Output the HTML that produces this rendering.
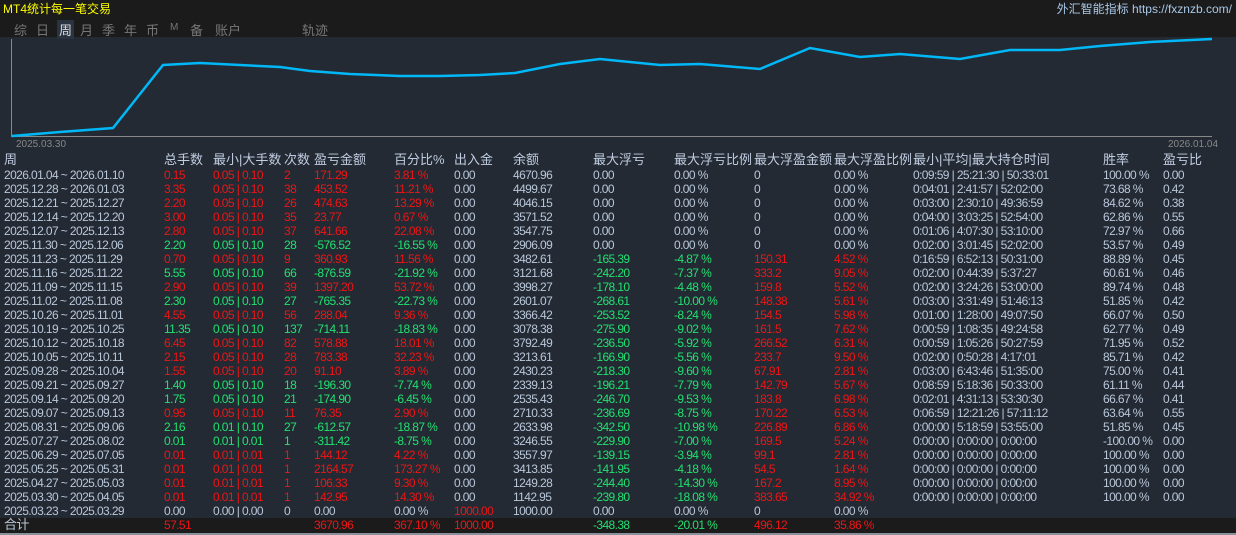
<!DOCTYPE html><html><head><meta charset="utf-8"><style>
*{margin:0;padding:0;box-sizing:border-box}
body{width:1236px;height:535px;background:#232a33;font-family:"Liberation Sans","Noto Sans CJK SC",sans-serif;font-size:12px;color:#b9c7da;position:relative;overflow:hidden}
.top{position:absolute;left:0;top:0;width:1236px;height:37px;background:#1b1b1b}
.title{position:absolute;left:3px;top:0;color:#ffff00;font-size:12px}
.site{position:absolute;right:4px;top:0;color:#a8c8e8;font-size:12px}
.tabs{position:absolute;top:20px;left:0;font-size:13px;color:#777}
.tabs span{position:absolute;white-space:nowrap}
.r{position:absolute;left:0;width:1236px;height:14px;line-height:14px;white-space:nowrap;letter-spacing:-0.6px}
.r span{position:absolute}
.c1{left:4px}.c2{left:164px}.c3{left:213px}.c4{left:284px}.c5{left:314px}.c6{left:394px}.c7{left:454px}.c8{left:513px}.c9{left:593px}.c10{left:674px}.c11{left:754px}.c12{left:834px}.c13{left:913px}.c14{left:1103px}.c15{left:1163px}
.R{color:#ee1515}.G{color:#22e070}
.h{font-size:13px;color:#c0cce0;letter-spacing:0}
.tot{background:#1b1b1b;height:16px;top:518px}
</style></head><body>
<div class="top"></div>
<div class="title">MT4统计每一笔交易</div>
<div class="site">外汇智能指标 https://fxznzb.com/</div>
<div class="tabs"><span style="left:14px">综</span><span style="left:36px">日</span><span style="left:58px;color:#ddd;background:#2a3340;padding:0 2px;left:57px">周</span><span style="left:80px">月</span><span style="left:102px">季</span><span style="left:124px">年</span><span style="left:146px">币</span><span style="left:170px;font-size:10px;top:2px">M</span><span style="left:190px">备</span><span style="left:215px">账户</span><span style="left:302px">轨迹</span></div>
<svg style="position:absolute;left:0;top:37px" width="1236" height="120">
<line x1="11.5" y1="2" x2="11.5" y2="100" stroke="#888"/>
<line x1="11" y1="99.5" x2="1212" y2="99.5" stroke="#888"/>
<polyline fill="none" stroke="#00b8f8" stroke-width="2.5" points="12,99 60,95 113,91 163,28 200,26 240,28 280,30 310,34 350,37 400,39 440,39 480,38 515,36 560,27 600,22 660,28 700,27 760,32 810,11 860,20 900,17 960,22 1010,13 1060,13 1100,9 1150,5 1212,2"/>
<text x="16" y="110" fill="#888" font-size="10" font-family="Liberation Sans">2025.03.30</text>
<text x="1168" y="110" fill="#888" font-size="10" font-family="Liberation Sans">2026.01.04</text>
</svg>
<div class="r h" style="top:153px"><span class="c1">周</span><span class="c2">总手数</span><span class="c3">最小|大手数</span><span class="c4">次数</span><span class="c5">盈亏金额</span><span class="c6">百分比%</span><span class="c7">出入金</span><span class="c8">余额</span><span class="c9">最大浮亏</span><span class="c10">最大浮亏比例</span><span class="c11">最大浮盈金额</span><span class="c12">最大浮盈比例</span><span class="c13">最小|平均|最大持仓时间</span><span class="c14">胜率</span><span class="c15">盈亏比</span></div>
<div class="r" style="top:168px"><span class="c1">2026.01.04 ~ 2026.01.10</span><span class="c2 R">0.15</span><span class="c3 R">0.05 | 0.10</span><span class="c4 R">2</span><span class="c5 R">171.29</span><span class="c6 R">3.81 %</span><span class="c7">0.00</span><span class="c8">4670.96</span><span class="c9">0.00</span><span class="c10">0.00 %</span><span class="c11">0</span><span class="c12">0.00 %</span><span class="c13">0:09:59 | 25:21:30 | 50:33:01</span><span class="c14">100.00 %</span><span class="c15">0.00</span></div>
<div class="r" style="top:182px"><span class="c1">2025.12.28 ~ 2026.01.03</span><span class="c2 R">3.35</span><span class="c3 R">0.05 | 0.10</span><span class="c4 R">38</span><span class="c5 R">453.52</span><span class="c6 R">11.21 %</span><span class="c7">0.00</span><span class="c8">4499.67</span><span class="c9">0.00</span><span class="c10">0.00 %</span><span class="c11">0</span><span class="c12">0.00 %</span><span class="c13">0:04:01 | 2:41:57 | 52:02:00</span><span class="c14">73.68 %</span><span class="c15">0.42</span></div>
<div class="r" style="top:196px"><span class="c1">2025.12.21 ~ 2025.12.27</span><span class="c2 R">2.20</span><span class="c3 R">0.05 | 0.10</span><span class="c4 R">26</span><span class="c5 R">474.63</span><span class="c6 R">13.29 %</span><span class="c7">0.00</span><span class="c8">4046.15</span><span class="c9">0.00</span><span class="c10">0.00 %</span><span class="c11">0</span><span class="c12">0.00 %</span><span class="c13">0:03:00 | 2:30:10 | 49:36:59</span><span class="c14">84.62 %</span><span class="c15">0.38</span></div>
<div class="r" style="top:210px"><span class="c1">2025.12.14 ~ 2025.12.20</span><span class="c2 R">3.00</span><span class="c3 R">0.05 | 0.10</span><span class="c4 R">35</span><span class="c5 R">23.77</span><span class="c6 R">0.67 %</span><span class="c7">0.00</span><span class="c8">3571.52</span><span class="c9">0.00</span><span class="c10">0.00 %</span><span class="c11">0</span><span class="c12">0.00 %</span><span class="c13">0:04:00 | 3:03:25 | 52:54:00</span><span class="c14">62.86 %</span><span class="c15">0.55</span></div>
<div class="r" style="top:224px"><span class="c1">2025.12.07 ~ 2025.12.13</span><span class="c2 R">2.80</span><span class="c3 R">0.05 | 0.10</span><span class="c4 R">37</span><span class="c5 R">641.66</span><span class="c6 R">22.08 %</span><span class="c7">0.00</span><span class="c8">3547.75</span><span class="c9">0.00</span><span class="c10">0.00 %</span><span class="c11">0</span><span class="c12">0.00 %</span><span class="c13">0:01:06 | 4:07:30 | 53:10:00</span><span class="c14">72.97 %</span><span class="c15">0.66</span></div>
<div class="r" style="top:238px"><span class="c1">2025.11.30 ~ 2025.12.06</span><span class="c2 G">2.20</span><span class="c3 G">0.05 | 0.10</span><span class="c4 G">28</span><span class="c5 G">-576.52</span><span class="c6 G">-16.55 %</span><span class="c7">0.00</span><span class="c8">2906.09</span><span class="c9">0.00</span><span class="c10">0.00 %</span><span class="c11">0</span><span class="c12">0.00 %</span><span class="c13">0:02:00 | 3:01:45 | 52:02:00</span><span class="c14">53.57 %</span><span class="c15">0.49</span></div>
<div class="r" style="top:252px"><span class="c1">2025.11.23 ~ 2025.11.29</span><span class="c2 R">0.70</span><span class="c3 R">0.05 | 0.10</span><span class="c4 R">9</span><span class="c5 R">360.93</span><span class="c6 R">11.56 %</span><span class="c7">0.00</span><span class="c8">3482.61</span><span class="c9 G">-165.39</span><span class="c10 G">-4.87 %</span><span class="c11 R">150.31</span><span class="c12 R">4.52 %</span><span class="c13">0:16:59 | 6:52:13 | 50:31:00</span><span class="c14">88.89 %</span><span class="c15">0.45</span></div>
<div class="r" style="top:266px"><span class="c1">2025.11.16 ~ 2025.11.22</span><span class="c2 G">5.55</span><span class="c3 G">0.05 | 0.10</span><span class="c4 G">66</span><span class="c5 G">-876.59</span><span class="c6 G">-21.92 %</span><span class="c7">0.00</span><span class="c8">3121.68</span><span class="c9 G">-242.20</span><span class="c10 G">-7.37 %</span><span class="c11 R">333.2</span><span class="c12 R">9.05 %</span><span class="c13">0:02:00 | 0:44:39 | 5:37:27</span><span class="c14">60.61 %</span><span class="c15">0.46</span></div>
<div class="r" style="top:280px"><span class="c1">2025.11.09 ~ 2025.11.15</span><span class="c2 R">2.90</span><span class="c3 R">0.05 | 0.10</span><span class="c4 R">39</span><span class="c5 R">1397.20</span><span class="c6 R">53.72 %</span><span class="c7">0.00</span><span class="c8">3998.27</span><span class="c9 G">-178.10</span><span class="c10 G">-4.48 %</span><span class="c11 R">159.8</span><span class="c12 R">5.52 %</span><span class="c13">0:02:00 | 3:24:26 | 53:00:00</span><span class="c14">89.74 %</span><span class="c15">0.48</span></div>
<div class="r" style="top:294px"><span class="c1">2025.11.02 ~ 2025.11.08</span><span class="c2 G">2.30</span><span class="c3 G">0.05 | 0.10</span><span class="c4 G">27</span><span class="c5 G">-765.35</span><span class="c6 G">-22.73 %</span><span class="c7">0.00</span><span class="c8">2601.07</span><span class="c9 G">-268.61</span><span class="c10 G">-10.00 %</span><span class="c11 R">148.38</span><span class="c12 R">5.61 %</span><span class="c13">0:03:00 | 3:31:49 | 51:46:13</span><span class="c14">51.85 %</span><span class="c15">0.42</span></div>
<div class="r" style="top:308px"><span class="c1">2025.10.26 ~ 2025.11.01</span><span class="c2 R">4.55</span><span class="c3 R">0.05 | 0.10</span><span class="c4 R">56</span><span class="c5 R">288.04</span><span class="c6 R">9.36 %</span><span class="c7">0.00</span><span class="c8">3366.42</span><span class="c9 G">-253.52</span><span class="c10 G">-8.24 %</span><span class="c11 R">154.5</span><span class="c12 R">5.98 %</span><span class="c13">0:01:00 | 1:28:00 | 49:07:50</span><span class="c14">66.07 %</span><span class="c15">0.50</span></div>
<div class="r" style="top:322px"><span class="c1">2025.10.19 ~ 2025.10.25</span><span class="c2 G">11.35</span><span class="c3 G">0.05 | 0.10</span><span class="c4 G">137</span><span class="c5 G">-714.11</span><span class="c6 G">-18.83 %</span><span class="c7">0.00</span><span class="c8">3078.38</span><span class="c9 G">-275.90</span><span class="c10 G">-9.02 %</span><span class="c11 R">161.5</span><span class="c12 R">7.62 %</span><span class="c13">0:00:59 | 1:08:35 | 49:24:58</span><span class="c14">62.77 %</span><span class="c15">0.49</span></div>
<div class="r" style="top:336px"><span class="c1">2025.10.12 ~ 2025.10.18</span><span class="c2 R">6.45</span><span class="c3 R">0.05 | 0.10</span><span class="c4 R">82</span><span class="c5 R">578.88</span><span class="c6 R">18.01 %</span><span class="c7">0.00</span><span class="c8">3792.49</span><span class="c9 G">-236.50</span><span class="c10 G">-5.92 %</span><span class="c11 R">266.52</span><span class="c12 R">6.31 %</span><span class="c13">0:00:59 | 1:05:26 | 50:27:59</span><span class="c14">71.95 %</span><span class="c15">0.52</span></div>
<div class="r" style="top:350px"><span class="c1">2025.10.05 ~ 2025.10.11</span><span class="c2 R">2.15</span><span class="c3 R">0.05 | 0.10</span><span class="c4 R">28</span><span class="c5 R">783.38</span><span class="c6 R">32.23 %</span><span class="c7">0.00</span><span class="c8">3213.61</span><span class="c9 G">-166.90</span><span class="c10 G">-5.56 %</span><span class="c11 R">233.7</span><span class="c12 R">9.50 %</span><span class="c13">0:02:00 | 0:50:28 | 4:17:01</span><span class="c14">85.71 %</span><span class="c15">0.42</span></div>
<div class="r" style="top:364px"><span class="c1">2025.09.28 ~ 2025.10.04</span><span class="c2 R">1.55</span><span class="c3 R">0.05 | 0.10</span><span class="c4 R">20</span><span class="c5 R">91.10</span><span class="c6 R">3.89 %</span><span class="c7">0.00</span><span class="c8">2430.23</span><span class="c9 G">-218.30</span><span class="c10 G">-9.60 %</span><span class="c11 R">67.91</span><span class="c12 R">2.81 %</span><span class="c13">0:03:00 | 6:43:46 | 51:35:00</span><span class="c14">75.00 %</span><span class="c15">0.41</span></div>
<div class="r" style="top:378px"><span class="c1">2025.09.21 ~ 2025.09.27</span><span class="c2 G">1.40</span><span class="c3 G">0.05 | 0.10</span><span class="c4 G">18</span><span class="c5 G">-196.30</span><span class="c6 G">-7.74 %</span><span class="c7">0.00</span><span class="c8">2339.13</span><span class="c9 G">-196.21</span><span class="c10 G">-7.79 %</span><span class="c11 R">142.79</span><span class="c12 R">5.67 %</span><span class="c13">0:08:59 | 5:18:36 | 50:33:00</span><span class="c14">61.11 %</span><span class="c15">0.44</span></div>
<div class="r" style="top:392px"><span class="c1">2025.09.14 ~ 2025.09.20</span><span class="c2 G">1.75</span><span class="c3 G">0.05 | 0.10</span><span class="c4 G">21</span><span class="c5 G">-174.90</span><span class="c6 G">-6.45 %</span><span class="c7">0.00</span><span class="c8">2535.43</span><span class="c9 G">-246.70</span><span class="c10 G">-9.53 %</span><span class="c11 R">183.8</span><span class="c12 R">6.98 %</span><span class="c13">0:02:01 | 4:31:13 | 53:30:30</span><span class="c14">66.67 %</span><span class="c15">0.41</span></div>
<div class="r" style="top:406px"><span class="c1">2025.09.07 ~ 2025.09.13</span><span class="c2 R">0.95</span><span class="c3 R">0.05 | 0.10</span><span class="c4 R">11</span><span class="c5 R">76.35</span><span class="c6 R">2.90 %</span><span class="c7">0.00</span><span class="c8">2710.33</span><span class="c9 G">-236.69</span><span class="c10 G">-8.75 %</span><span class="c11 R">170.22</span><span class="c12 R">6.53 %</span><span class="c13">0:06:59 | 12:21:26 | 57:11:12</span><span class="c14">63.64 %</span><span class="c15">0.55</span></div>
<div class="r" style="top:420px"><span class="c1">2025.08.31 ~ 2025.09.06</span><span class="c2 G">2.16</span><span class="c3 G">0.01 | 0.10</span><span class="c4 G">27</span><span class="c5 G">-612.57</span><span class="c6 G">-18.87 %</span><span class="c7">0.00</span><span class="c8">2633.98</span><span class="c9 G">-342.50</span><span class="c10 G">-10.98 %</span><span class="c11 R">226.89</span><span class="c12 R">6.86 %</span><span class="c13">0:00:00 | 5:18:59 | 53:55:00</span><span class="c14">51.85 %</span><span class="c15">0.45</span></div>
<div class="r" style="top:434px"><span class="c1">2025.07.27 ~ 2025.08.02</span><span class="c2 G">0.01</span><span class="c3 G">0.01 | 0.01</span><span class="c4 G">1</span><span class="c5 G">-311.42</span><span class="c6 G">-8.75 %</span><span class="c7">0.00</span><span class="c8">3246.55</span><span class="c9 G">-229.90</span><span class="c10 G">-7.00 %</span><span class="c11 R">169.5</span><span class="c12 R">5.24 %</span><span class="c13">0:00:00 | 0:00:00 | 0:00:00</span><span class="c14">-100.00 %</span><span class="c15">0.00</span></div>
<div class="r" style="top:448px"><span class="c1">2025.06.29 ~ 2025.07.05</span><span class="c2 R">0.01</span><span class="c3 R">0.01 | 0.01</span><span class="c4 R">1</span><span class="c5 R">144.12</span><span class="c6 R">4.22 %</span><span class="c7">0.00</span><span class="c8">3557.97</span><span class="c9 G">-139.15</span><span class="c10 G">-3.94 %</span><span class="c11 R">99.1</span><span class="c12 R">2.81 %</span><span class="c13">0:00:00 | 0:00:00 | 0:00:00</span><span class="c14">100.00 %</span><span class="c15">0.00</span></div>
<div class="r" style="top:462px"><span class="c1">2025.05.25 ~ 2025.05.31</span><span class="c2 R">0.01</span><span class="c3 R">0.01 | 0.01</span><span class="c4 R">1</span><span class="c5 R">2164.57</span><span class="c6 R">173.27 %</span><span class="c7">0.00</span><span class="c8">3413.85</span><span class="c9 G">-141.95</span><span class="c10 G">-4.18 %</span><span class="c11 R">54.5</span><span class="c12 R">1.64 %</span><span class="c13">0:00:00 | 0:00:00 | 0:00:00</span><span class="c14">100.00 %</span><span class="c15">0.00</span></div>
<div class="r" style="top:476px"><span class="c1">2025.04.27 ~ 2025.05.03</span><span class="c2 R">0.01</span><span class="c3 R">0.01 | 0.01</span><span class="c4 R">1</span><span class="c5 R">106.33</span><span class="c6 R">9.30 %</span><span class="c7">0.00</span><span class="c8">1249.28</span><span class="c9 G">-244.40</span><span class="c10 G">-14.30 %</span><span class="c11 R">167.2</span><span class="c12 R">8.95 %</span><span class="c13">0:00:00 | 0:00:00 | 0:00:00</span><span class="c14">100.00 %</span><span class="c15">0.00</span></div>
<div class="r" style="top:490px"><span class="c1">2025.03.30 ~ 2025.04.05</span><span class="c2 R">0.01</span><span class="c3 R">0.01 | 0.01</span><span class="c4 R">1</span><span class="c5 R">142.95</span><span class="c6 R">14.30 %</span><span class="c7">0.00</span><span class="c8">1142.95</span><span class="c9 G">-239.80</span><span class="c10 G">-18.08 %</span><span class="c11 R">383.65</span><span class="c12 R">34.92 %</span><span class="c13">0:00:00 | 0:00:00 | 0:00:00</span><span class="c14">100.00 %</span><span class="c15">0.00</span></div>
<div class="r" style="top:504px"><span class="c1">2025.03.23 ~ 2025.03.29</span><span class="c2">0.00</span><span class="c3">0.00 | 0.00</span><span class="c4">0</span><span class="c5">0.00</span><span class="c6">0.00 %</span><span class="c7 R">1000.00</span><span class="c8">1000.00</span><span class="c9">0.00</span><span class="c10">0.00 %</span><span class="c11">0</span><span class="c12">0.00 %</span></div>
<div class="r tot"><span class="c1" style="font-size:13px">合计</span><span class="c2 R">57.51</span><span class="c5 R">3670.96</span><span class="c6 R">367.10 %</span><span class="c7 R">1000.00</span><span class="c9 G">-348.38</span><span class="c10 G">-20.01 %</span><span class="c11 R">496.12</span><span class="c12 R">35.86 %</span></div>
<div style="position:absolute;left:0;top:533px;width:1236px;height:2px;background:#8a9099"></div>
</body></html>
